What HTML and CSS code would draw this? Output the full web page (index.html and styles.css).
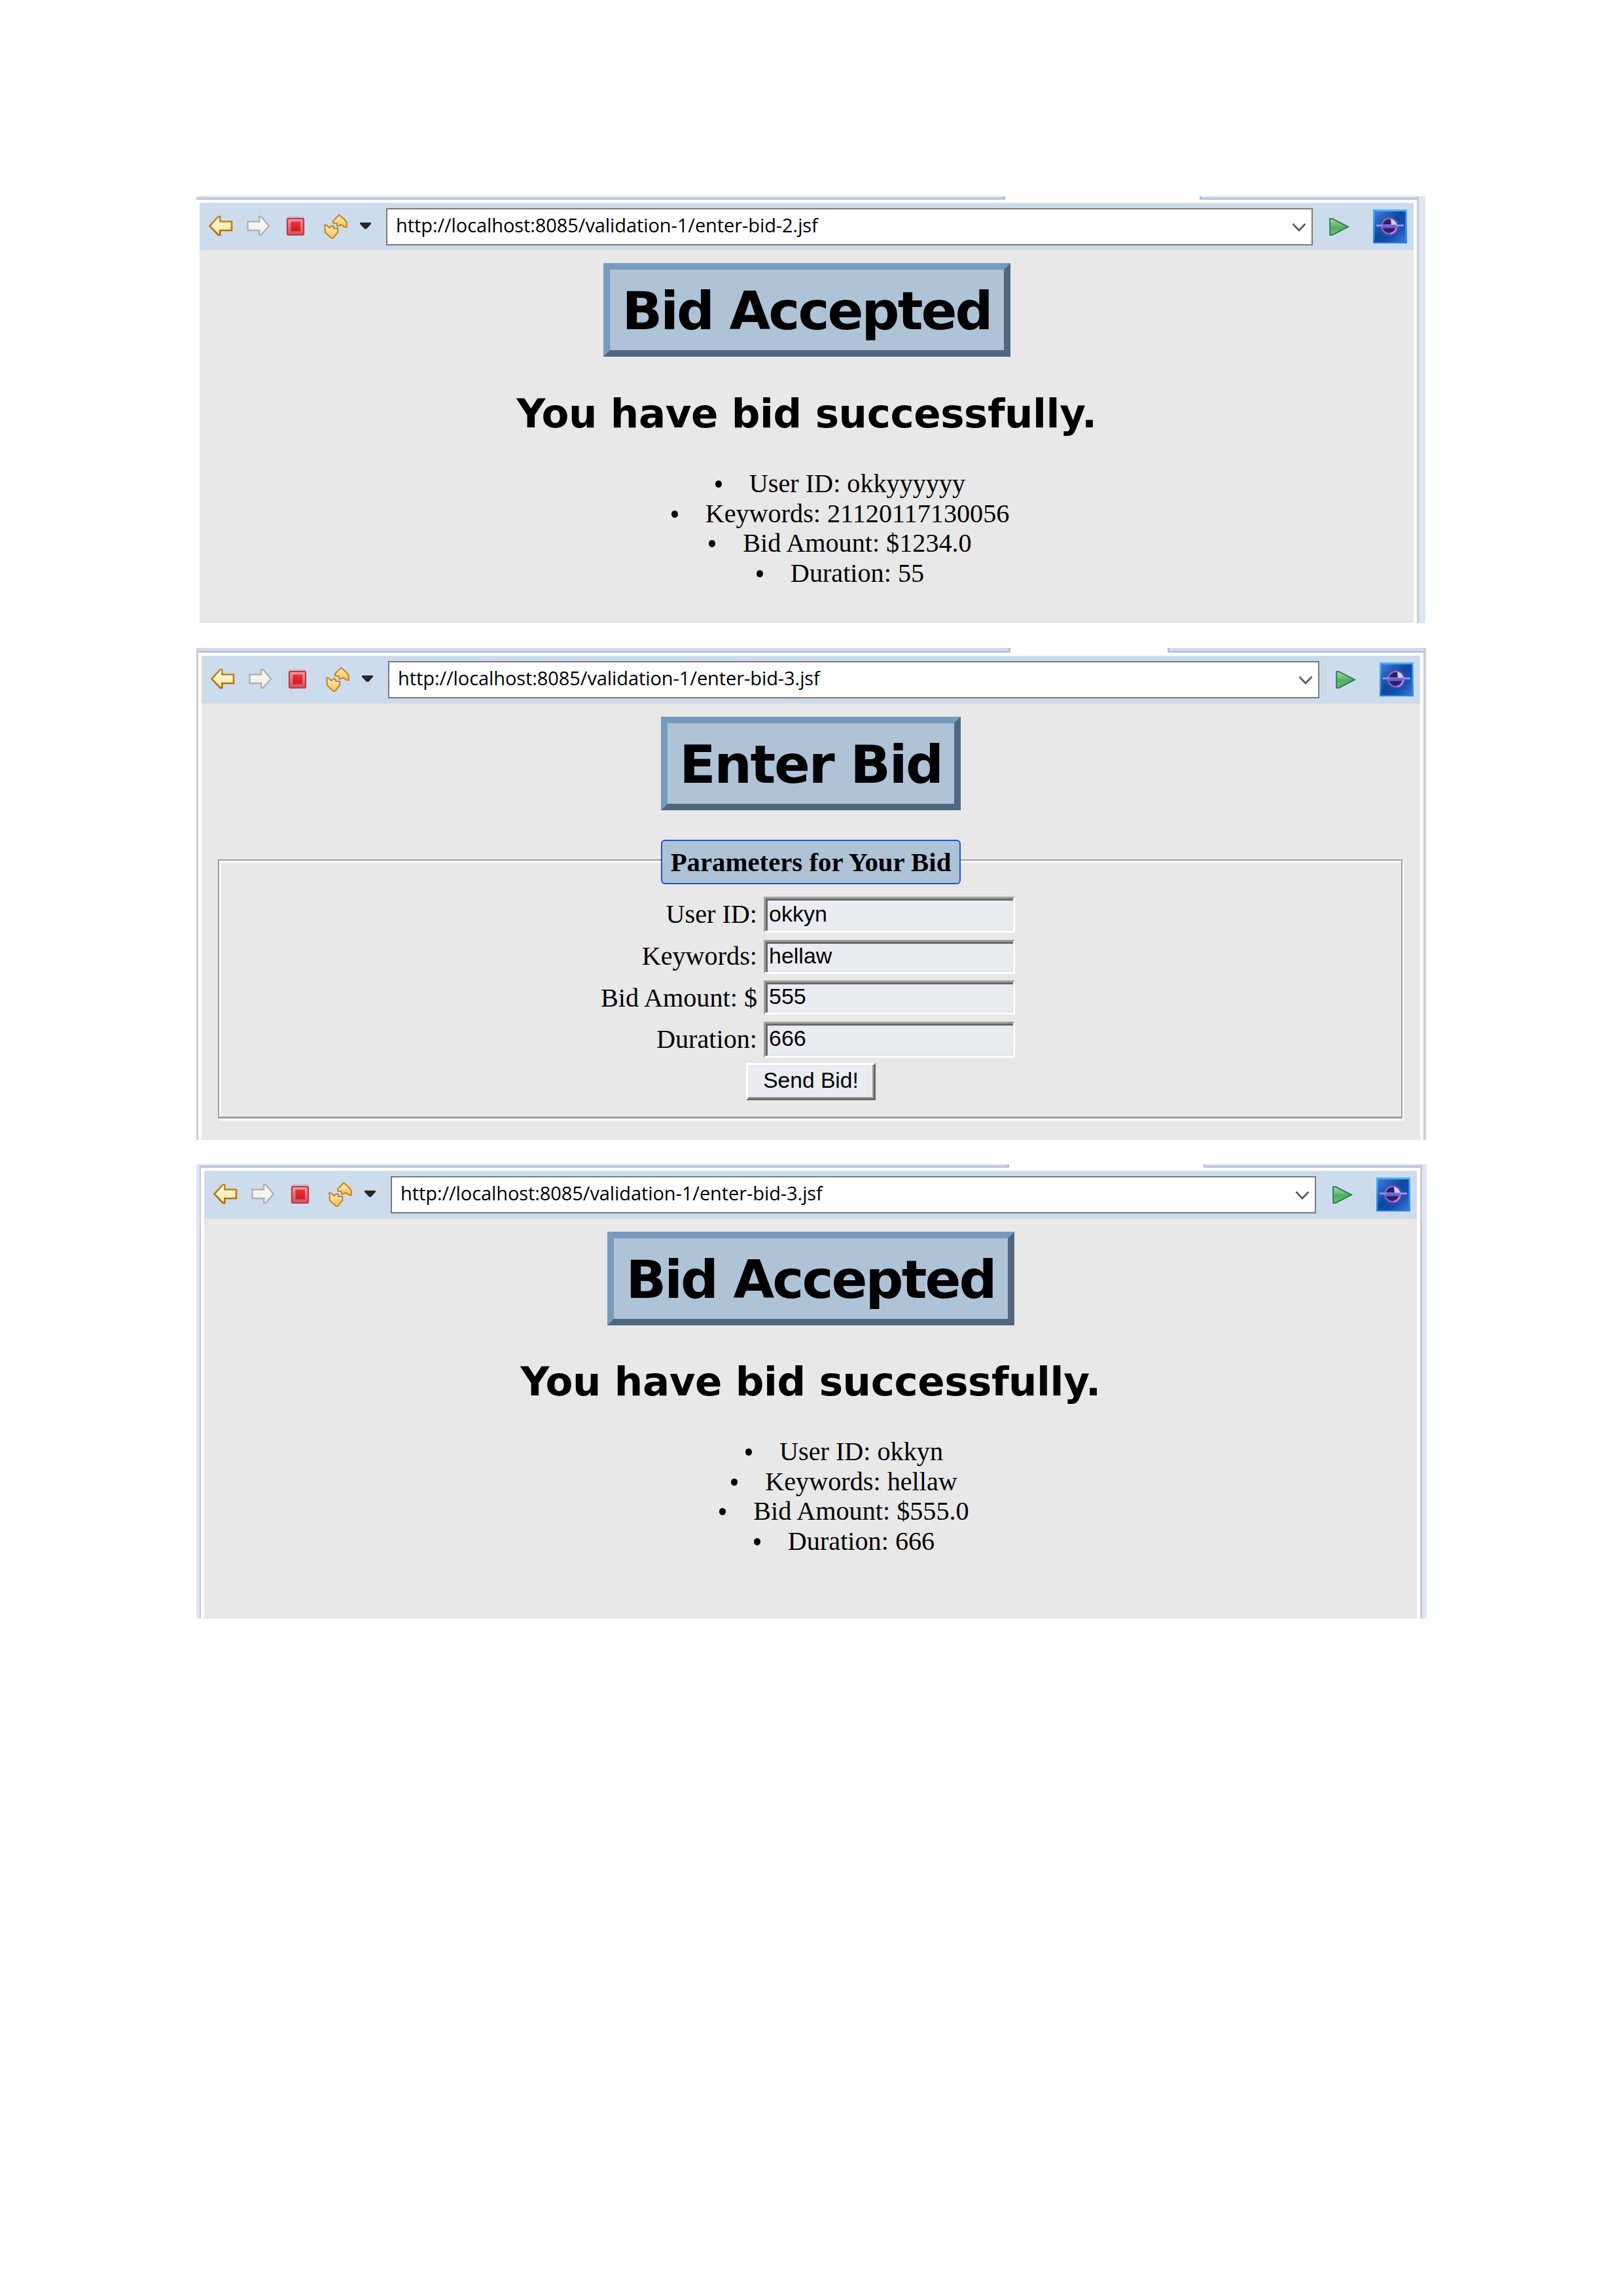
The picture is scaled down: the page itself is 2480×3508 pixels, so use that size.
FILE: index.html
```
<!DOCTYPE html>
<html lang="en">
<head>
<meta charset="utf-8">
<title>Bid validation</title>
<link rel="stylesheet" href="styles.css">
</head>
<body>
<svg class="defs" width="0" height="0" aria-hidden="true">
  <defs>
    <linearGradient id="gold" x1="0" y1="0" x2="0" y2="1"><stop offset="0" stop-color="#fffef5"/><stop offset="1" stop-color="#fbe491"/></linearGradient>
    <linearGradient id="goldEdge" x1="0" y1="0" x2="0" y2="1"><stop offset="0" stop-color="#c58a24"/><stop offset="1" stop-color="#ab6a04"/></linearGradient>
    <linearGradient id="silver" x1="0" y1="0" x2="0" y2="1"><stop offset="0" stop-color="#fafafa"/><stop offset="1" stop-color="#ededed"/></linearGradient>
    <linearGradient id="red" x1="0" y1="0" x2="0" y2="1"><stop offset="0" stop-color="#ef3038"/><stop offset="1" stop-color="#cf1b26"/></linearGradient>
    <linearGradient id="redRing" x1="0" y1="0" x2="0" y2="1"><stop offset="0" stop-color="#f39aa0"/><stop offset="1" stop-color="#cf535c"/></linearGradient>
    <linearGradient id="amber" x1="0" y1="0" x2="0" y2="1"><stop offset="0" stop-color="#fff0cc"/><stop offset="1" stop-color="#f3be4c"/></linearGradient>
    <linearGradient id="green" x1="0" y1="0" x2="0" y2="1"><stop offset="0" stop-color="#b5d994"/><stop offset=".55" stop-color="#4fae68"/><stop offset="1" stop-color="#6cbf62"/></linearGradient>
    <linearGradient id="sky" x1="0" y1="0" x2="1" y2="1"><stop offset="0" stop-color="#3f7de0"/><stop offset=".45" stop-color="#0d489f"/><stop offset=".7" stop-color="#1450ae"/><stop offset="1" stop-color="#3a7be0"/></linearGradient>
    <linearGradient id="rim" x1="0" y1="0" x2="0" y2="1"><stop offset="0" stop-color="#4db2f5"/><stop offset="1" stop-color="#2588e0"/></linearGradient>
    <radialGradient id="halo"><stop offset=".6" stop-color="#6a54b4"/><stop offset="1" stop-color="#3a4fae" stop-opacity="0"/></radialGradient>
    <symbol id="back" viewBox="0 0 40 72"><path d="M3.5 35.2 16.5 21H19.3V28.5H37V42H19.3V49H16.5Z" fill="url(#gold)" stroke="url(#goldEdge)" stroke-width="2.6"/></symbol>
    <symbol id="forward" viewBox="0 0 40 72"><path d="M36 35.2 24 21H21.2V28.5H3.5V42H21.2V49H24Z" fill="url(#silver)" stroke="#b0b0b0" stroke-width="2.4"/></symbol>
    <symbol id="stop" viewBox="0 0 30 72"><rect x="1" y="20.5" width="27" height="29" rx="3" fill="#c4a9bf" opacity=".6"/><rect x="2" y="24" width="25" height="25" rx="2" fill="url(#redRing)" stroke="#c23646" stroke-width="2.2"/><rect x="7.5" y="28.5" width="14.5" height="15" fill="url(#red)"/></symbol>
    <symbol id="refresh" viewBox="0 0 38 72"><path d="M14.8 27.8 24.3 18.2 32.7 25.7 35.8 30V37H32.5L27.5 33.5 21.5 35.5 20.5 31H15.5Z" fill="url(#amber)" stroke="#c48a28" stroke-width="2.2"/><path d="M2.2 33.8H4.6L9.3 38 13.3 35 16 36V39H22.2V45L20 47.5 15 54H12.7L8 50 3 45Z" fill="url(#amber)" stroke="#c48a28" stroke-width="2.2"/></symbol>
    <symbol id="caret" viewBox="0 0 20 72"><path d="M1 30H18V32L11 39.7H8L1 32Z" fill="#272727"/></symbol>
    <symbol id="chevron" viewBox="0 0 24 72"><path d="M2.5 32 12 42 21.5 32" fill="none" stroke="#595959" stroke-width="2.6"/></symbol>
    <symbol id="play" viewBox="0 0 34 72"><path d="M2.2 24.3H6L30 36.5 6 49H2.2Z" fill="url(#green)" stroke="#2b8057" stroke-width="2"/></symbol>
    <symbol id="globe" viewBox="0 0 52 72">
      <rect y="10" width="52" height="52" fill="url(#rim)"/>
      <rect x="2.5" y="13" width="47" height="47" fill="url(#sky)"/>
      <circle cx="25" cy="35.500" r="17" fill="url(#halo)"/>
      <circle cx="25" cy="35.500" r="11.500" fill="#2d1c6b" stroke="#8a6fc0" stroke-width="2"/>
      <path d="M27 24.500A11.500 11.500 0 0 1 36 33H28Z" fill="#d9cdee"/>
      <path d="M36 37A11.500 11.500 0 0 1 27 47" fill="none" stroke="#cf74e8" stroke-width="3"/>
      <rect x="5" y="33" width="42" height="3" fill="#9a8df0"/>
      <rect x="14" y="34" width="22" height="4.500" fill="#6a66c8"/>
    </symbol>
  </defs>
</svg>

<section class="window window-first">
  <div class="main">
    <div class="tabs"><i class="tab-left"></i><i class="tab-right"></i></div>
    <div class="toolbar">
      <svg class="i-back"><use href="#back"/></svg><svg class="i-forward"><use href="#forward"/></svg><svg class="i-stop"><use href="#stop"/></svg><svg class="i-refresh"><use href="#refresh"/></svg><svg class="i-caret"><use href="#caret"/></svg>
      <div class="address"><span>http://localhost:8085/validation-1/enter-bid-2.jsf</span><svg class="i-chevron"><use href="#chevron"/></svg></div>
      <svg class="i-play"><use href="#play"/></svg><svg class="i-globe"><use href="#globe"/></svg>
    </div>
    <div class="page">
      <h1>Bid Accepted</h1>
      <h2>You have bid successfully.</h2>
      <ul>
        <li><span>User ID: okkyyyyyy</span></li>
        <li><span>Keywords: 21120117130056</span></li>
        <li><span>Bid Amount: $1234.0</span></li>
        <li><span>Duration: 55</span></li>
      </ul>
    </div>
  </div>
  <div class="edge-right"></div>
</section>

<section class="window window-second">
  <div class="edge-left"></div>
  <div class="main">
    <div class="tabs"><i class="tab-left"></i><i class="tab-right"></i></div>
    <div class="toolbar">
      <svg class="i-back"><use href="#back"/></svg><svg class="i-forward"><use href="#forward"/></svg><svg class="i-stop"><use href="#stop"/></svg><svg class="i-refresh"><use href="#refresh"/></svg><svg class="i-caret"><use href="#caret"/></svg>
      <div class="address"><span>http://localhost:8085/validation-1/enter-bid-3.jsf</span><svg class="i-chevron"><use href="#chevron"/></svg></div>
      <svg class="i-play"><use href="#play"/></svg><svg class="i-globe"><use href="#globe"/></svg>
    </div>
    <div class="page">
      <h1 class="narrow">Enter Bid</h1>
      <form class="group">
        <div class="legend">Parameters for Your Bid</div>
        <div class="rows">
          <label class="row tall"><span>User ID:</span><input type="text" value="okkyn"></label>
          <label class="row raised"><span>Keywords:</span><input type="text" value="hellaw"></label>
          <label class="row"><span>Bid Amount: $</span><input type="text" value="555"></label>
          <label class="row tall"><span>Duration:</span><input type="text" value="666"></label>
        </div>
        <button type="button">Send Bid!</button>
      </form>
    </div>
  </div>
  <div class="edge-right"></div>
</section>

<section class="window window-third">
  <div class="edge-left"></div>
  <div class="main">
    <div class="tabs"><i class="tab-left"></i><i class="tab-right"></i></div>
    <div class="toolbar">
      <svg class="i-back"><use href="#back"/></svg><svg class="i-forward"><use href="#forward"/></svg><svg class="i-stop"><use href="#stop"/></svg><svg class="i-refresh"><use href="#refresh"/></svg><svg class="i-caret"><use href="#caret"/></svg>
      <div class="address"><span>http://localhost:8085/validation-1/enter-bid-3.jsf</span><svg class="i-chevron"><use href="#chevron"/></svg></div>
      <svg class="i-play"><use href="#play"/></svg><svg class="i-globe"><use href="#globe"/></svg>
    </div>
    <div class="page">
      <h1>Bid Accepted</h1>
      <h2>You have bid successfully.</h2>
      <ul>
        <li><span>User ID: okkyn</span></li>
        <li><span>Keywords: hellaw</span></li>
        <li><span>Bid Amount: $555.0</span></li>
        <li><span>Duration: 666</span></li>
      </ul>
    </div>
  </div>
  <div class="edge-right"></div>
</section>
</body>
</html>
```
FILE: styles.css
```
* { box-sizing: border-box; }
body {
  margin: 0;
  padding: 300px 300px 0;
  height: 3508px;
  background: #fff;
  color: #000;
  font-family: "Liberation Serif", serif;
  display: flex;
  flex-direction: column;
}
.defs { position: absolute; }

/* Browser windows */
.window { display: flex; flex: none; width: 1880px; }
.window-first { width: 1878px; height: 652px; --tab: 1236px; --gap: 297px; --strip: 5px; --bar: 72px; }
.window-second { height: 752px; margin-top: 38px; --tab: 1241px; --gap: 240px; --strip: 7px; --bar: 73px; }
.window-third { height: 694px; margin-top: 37px; --tab: 1235px; --gap: 297px; --strip: 5px; --bar: 73px; }

.edge-left, .edge-right { flex: none; border: 0 solid #ccc; background: #dfe5f6; }
.window-first .edge-right { width: 13px; border-left-width: 3px; }
.window-second .edge-left { width: 3px; border-left-width: 3px; }
.window-second .edge-right { width: 5px; border-left-width: 3px; }
.window-third .edge-left { width: 7px; border-right-width: 2px; }
.window-third .edge-right { width: 10px; border-left-width: 3px; }

.main { flex: 1; display: flex; flex-direction: column; }
.tabs { display: flex; gap: var(--gap); height: var(--strip); margin-bottom: 5px; }
.tabs i { background: #cddcec; border: 0 solid #b4bad0; border-bottom-width: 2px; }
.tabs .tab-left { width: var(--tab); border-right-width: 3px; }
.tabs .tab-right { flex: 1; border-left-width: 3px; }

/* Toolbar */
.toolbar {
  display: flex;
  flex: none;
  height: var(--bar);
  margin: 0 5px;
  padding: 0 10px 0 12px;
  background: #cddcec;
}
.toolbar svg { flex: none; height: 72px; }
.i-back { width: 40px; }
.i-forward { width: 40px; margin-left: 18px; }
.i-stop { width: 30px; margin-left: 22px; }
.i-refresh { width: 38px; margin-left: 27px; }
.i-caret { width: 20px; margin-left: 17px; }
.i-play { width: 34px; margin-left: 24px; }
.i-globe { width: 52px; margin-left: 34px; }
.address {
  flex: 1;
  display: flex;
  justify-content: space-between;
  height: 57px;
  margin: 8px 0 0 21px;
  padding: 0 7px 0 13px;
  border: 2px solid #7a7a7a;
  background: #fff;
  font: 29px/47px "Open Sans", sans-serif;
  letter-spacing: -0.08px;
  white-space: nowrap;
}
.i-chevron { width: 24px; margin-top: -10px; }

/* Page content */
.page {
  flex: 1;
  display: flex;
  flex-direction: column;
  align-items: center;
  margin: 0 5px;
  padding-top: 20px;
  background: #e8e8e8;
}
h1 {
  flex: none;
  width: 622px;
  height: 143px;
  margin: 0;
  border: 10px solid;
  border-color: #779bbd #50677f #50677f #779bbd;
  background: #afc3d7;
  text-align: center;
  font: bold 81px/127px "DejaVu Sans", sans-serif;
  letter-spacing: -2.900px;
  white-space: nowrap;
}
h1.narrow { width: 458px; letter-spacing: -2.300px; }
h2 {
  margin: 51px 0 0;
  font: bold 61px/71px "DejaVu Sans", sans-serif;
  letter-spacing: -0.4px;
  white-space: nowrap;
}
.window-third h2 { margin-top: 50px; }
ul {
  align-self: stretch;
  margin: 49px 0 0;
  padding: 0 0 0 155px;
  list-style: none;
  text-align: center;
  font-size: 40.2px;
  line-height: 45.6px;
}
li span { position: relative; }
li span::before {
  content: "";
  position: absolute;
  left: -52px;
  top: 18px;
  width: 10px;
  height: 11px;
  border-radius: 50%;
  background: #000;
}

/* Bid form */
.group {
  align-self: stretch;
  display: flex;
  flex-direction: column;
  align-items: center;
  height: 396px;
  margin: 75px 27px 0 25px;
  border: 2px solid #a0a0a0;
  border-bottom-width: 3px;
  box-shadow: 2px 3px 0 #fff, inset 2px 3px 0 #fff;
}
.legend {
  flex: none;
  position: relative;
  left: 1px;
  width: 458px;
  height: 68px;
  margin-top: -32px;
  border: 2px solid #1e55c2;
  border-radius: 6px;
  background: #afc3d7;
  text-align: center;
  font-size: 40.8px;
  font-weight: bold;
  line-height: 65px;
  white-space: nowrap;
}
.rows {
  align-self: stretch;
  display: flex;
  flex-direction: column;
  gap: 10.6px;
  margin-top: 19px;
}
.row { display: flex; gap: 10px; height: 52px; }
.row.tall { height: 55px; }
.row span { width: 822px; text-align: right; font-size: 40.2px; line-height: 54px; white-space: nowrap; }
.row.raised span { line-height: 50px; }
.row input {
  width: 384px;
  height: 100%;
  margin: 0;
  padding: 0 0 3px 5px;
  border: 3px solid;
  border-color: #a0a0a0 #fff #fff #a0a0a0;
  border-radius: 0;
  outline: none;
  background: #eaecf2;
  box-shadow: inset 3px 3px 0 #696969, inset -2px -2px 0 #e3e3e3;
  color: #000;
  font: 34px "Liberation Sans", sans-serif;
}
button {
  width: 198px;
  height: 57px;
  margin: 8px 0 0 2px;
  padding: 0 0 2px;
  border: 3px solid;
  border-color: #fff #696969 #696969 #fff;
  border-radius: 0;
  background: #eaecf2;
  box-shadow: inset -2px -2px 0 #a0a0a0, inset 2px 2px 0 #e8e9ee;
  color: #000;
  font: 33.6px "Liberation Sans", sans-serif;
  white-space: nowrap;
}
```
